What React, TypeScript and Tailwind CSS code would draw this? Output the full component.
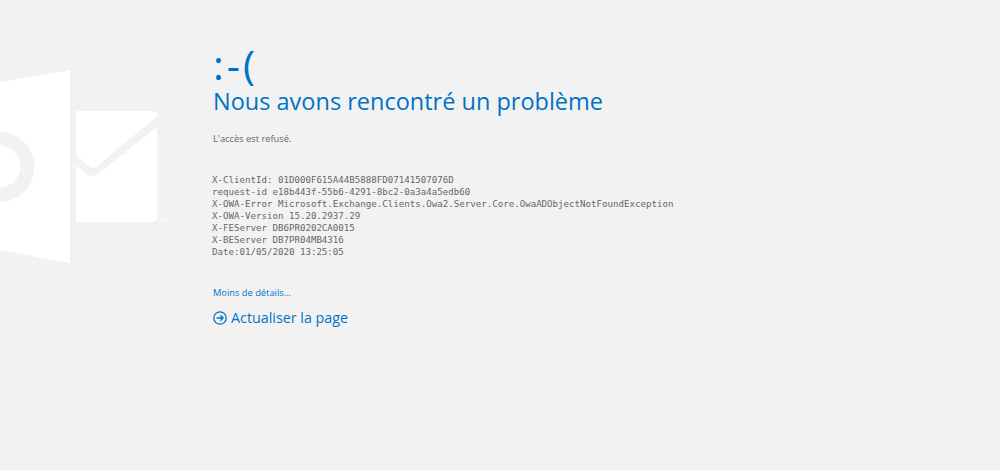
const sans = "font-['Open_Sans','Noto_Sans',sans-serif]";

const details = [
  'X-ClientId: 01D000F615A44B5888FD07141507076D',
  'request-id e18b443f-55b6-4291-8bc2-0a3a4a5edb60',
  'X-OWA-Error Microsoft.Exchange.Clients.Owa2.Server.Core.OwaADObjectNotFoundException',
  'X-OWA-Version 15.20.2937.29',
  'X-FEServer DB6PR0202CA0015',
  'X-BEServer DB7PR04MB4316',
  'Date:01/05/2020 13:25:05',
];

function OutlookLogo() {
  return (
    <svg width="170" height="200" viewBox="0 0 170 200" className="shrink-0" fill="#fff">
      <path
        fillRule="evenodd"
        d="M0 12 L70 0 V193 L0 180 Z M0 62 A34.500 35 0 0 1 0 132 A34.500 35 0 0 1 0 62 Z M-2 75 A22.500 21.500 0 0 0 -2 118 A22.500 21.500 0 0 0 -2 75 Z"
      />
      <path d="M76 41 H152 Q157 41 157 45 Q157 47 155 48 L96 97 Q93 99 90 97 L76 85.500 Z" />
      <path d="M76 95 L87 104 Q93 108 98 104 L157 57 V148 Q157 152 152 152 H76 Z" />
      <text x="159" y="153" fontSize="5" fill="#fff">TM</text>
    </svg>
  );
}

export default function App() {
  return (
    <div className={`h-[470px] w-[1000px] overflow-hidden bg-[#f2f2f2] ${sans}`}>
      <div className="flex">
        <div className="w-[213px] shrink-0 pt-[70px]">
          <OutlookLogo />
        </div>
        <div className="flex flex-col">
          <div className="mt-[44px] text-[41px] leading-[41px] tracking-[3px] text-[#0072c6]">:-(</div>
          <h1 className="text-[23.5px] leading-[32px] font-normal text-[#0072c6]">Nous avons rencontré un problème</h1>
          <p className="mt-[15px] text-[9.3px] leading-[14px] text-[#666]">L'accès est refusé.</p>
          <div className="mt-[28px] -ml-px font-['DejaVu_Sans_Mono',monospace] text-[9.13px] leading-[12px] whitespace-pre text-[#666]">
            {details.map(line => (
              <div key={line}>{line}</div>
            ))}
          </div>
          <a className="mt-[28px] text-[9.3px] leading-[14px] text-[#0072c6]">Moins de détails...</a>
          <a className="mt-[8px] flex items-center gap-[4px] text-[14.3px] leading-[20px] text-[#0072c6]">
            <svg width="14" height="14" viewBox="0 0 14 14" fill="none" stroke="#0072c6" strokeWidth="1.300">
              <circle cx="7" cy="7" r="6.200" />
              <path d="M3.500 7 H10 M7.300 4.200 L10.200 7 L7.300 9.800" />
            </svg>
            Actualiser la page
          </a>
        </div>
      </div>
    </div>
  );
}
